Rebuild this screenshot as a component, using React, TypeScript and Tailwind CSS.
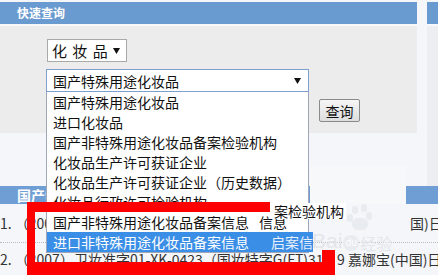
import React from "react";

const font = "font-['Noto_Sans_CJK_SC','Noto_Sans',sans-serif]";

const items = [
  "国产特殊用途化妆品",
  "进口化妆品",
  "国产非特殊用途化妆品备案检验机构",
  "化妆品生产许可获证企业",
  "化妆品生产许可获证企业（历史数据）",
  "化妆品行政许可检验机构",
];

function Tri() {
  return (
    <svg width="7" height="6" viewBox="0 0 7 6" className="shrink-0">
      <path d="M0 0 H7 L3.5 6 Z" fill="#111" />
    </svg>
  );
}

export default function App() {
  return (
    <div className={`relative w-[438px] h-[275px] overflow-hidden bg-[#f4f6f9] text-[#111] ${font}`}>
      {/* top area */}
      <div className="flex pt-[2px]">
        <div className="w-[417px]">
          <div className="h-[22px] bg-[#6a9bd0] flex items-center pl-[17px] text-white text-[12px] font-bold leading-none">
            快速查询
          </div>
          <div className="h-[2px] bg-[#f7f8fa]" />
          <div className="h-[107px] bg-[#ececec] pl-[46px] pt-[13px]">
            <div className="ml-[1px] w-[80px] h-[23px] border border-[#a9a9a9] bg-white flex items-center justify-between pl-[4px] pr-[6px]">
              <span className="text-[15px] leading-none whitespace-pre tracking-[1px]">化 妆 品</span>
              <Tri />
            </div>
            <div className="flex mt-[7px]">
              <div className="relative w-[263px]">
                <div className="h-[23px] border border-[#7f9fd0] bg-white flex items-center justify-between pl-[6px] pr-[7px]">
                  <span className="text-[14px] leading-none">国产特殊用途化妆品</span>
                  <Tri />
                </div>
                <div className="absolute z-10 left-0 top-[23px] w-[263px] bg-white border-x border-b border-[#9fa6b8] text-[14px] leading-none">
                  {items.map((t) => (
                    <div key={t} className="h-[20px] flex items-center pl-[6px] whitespace-nowrap">
                      {t}
                    </div>
                  ))}
                  <div className="h-[20px] flex items-center pl-[6px] whitespace-nowrap">
                    国产非特殊用途化妆品备案信息
                    <span className="ml-[10px]">信息</span>
                  </div>
                  <div className="h-[20px] flex items-center pl-[6px] whitespace-nowrap bg-[#3a8ee6] text-white -mr-[5px]">
                    进口非特殊用途化妆品备案信息
                    <span className="ml-[22px] text-[#e8f0fb]">启案信</span>
                  </div>
                </div>
              </div>
              <button className="ml-[10px] mt-[30px] w-[41px] h-[23px] border border-[#8a8a8a] rounded-[2px] bg-gradient-to-b from-[#f6f6f6] to-[#dddddd] text-[14px] leading-none flex items-center justify-center">
                查询
              </button>
            </div>
          </div>
        </div>
        <div className="w-[10px]" />
        <div className="flex-1">
          <div className="h-[22px] bg-[#6a9bd0]" />
          <div className="h-[2px] bg-[#f7f8fa]" />
          <div className="h-[107px] bg-[#eceef1]" />
        </div>
      </div>

      {/* gap between panels and table */}
      <div className="h-[53px] flex">
        <div className="flex-1" />
        <div className="w-[11px] bg-[#eceef1]" />
      </div>

      {/* table behind */}
      <div className="text-[14px] leading-none text-[#333]">
        <div className="h-[18px] bg-[#6e9ed3] flex items-center pl-[17px] text-white font-bold">
          国产特殊用途化妆品
        </div>
        <div className="h-[39px] flex items-center border-b border-dotted border-[#b8bcc4] whitespace-nowrap">
          <div className="w-[410px] shrink-0 overflow-hidden">1. （2007）卫妆准字01-XK-0422</div>
          <div className="shrink-0">国)日用品</div>
        </div>
        <div className="h-[34px] flex items-start pt-[9px] whitespace-nowrap">
          <div className="w-[337px] shrink-0 overflow-hidden">2. （2007）卫妆准字01-XK-0423（国妆特字G(FT)311</div>
          <div className="shrink-0">9 嘉娜宝(中国)日用品</div>
        </div>
      </div>

      {/* pasted artifact patch */}
      <div className="absolute left-[310px] top-[166px] w-[96px] h-[38px] bg-[#f7f8fa]" />

      {/* stray fragment */}
      <div className="absolute z-20 left-[274px] top-[203px] h-[16px] bg-white pr-[2px] text-[14px] leading-[16px] whitespace-nowrap">
        案检验机构
      </div>

      {/* watermark */}
      <div className="absolute z-30 left-[312px] top-[206px] pointer-events-none">
        <div className="relative w-[90px] h-[48px]">
          <div className="absolute left-[40px] top-[0px] w-[6px] h-[8px] rounded-full bg-[#e8ebef]" />
          <div className="absolute left-[49px] top-[-2px] w-[6px] h-[8px] rounded-full bg-[#e8ebef]" />
          <div className="absolute left-[35px] top-[8px] w-[6px] h-[8px] rounded-full bg-[#e8ebef]" />
          <div className="absolute left-[54px] top-[6px] w-[6px] h-[8px] rounded-full bg-[#e8ebef]" />
          <div className="absolute left-[40px] top-[12px] w-[16px] h-[12px] rounded-full bg-[#e8ebef]" />
          <div className="absolute left-0 top-[24px] flex items-end text-[#e3e6ea] font-['Liberation_Sans',sans-serif] text-[21px] leading-none">
            Bai
            <span className="mx-[1px] w-[16px] h-[16px] rounded-full bg-[#e8ebef] text-white text-[10px] flex items-center justify-center">du</span>
            <span className={`text-[16px] ${font}`}>经验</span>
          </div>
        </div>
      </div>

      {/* red annotation box */}
      <div className="absolute z-40 left-[27px] top-[202px] w-[243px] h-[10px] bg-[#ff0000]" />
      <div className="absolute z-40 left-[27px] top-[202px] w-[8px] h-[73px] bg-[#ff0000]" />
      <div className="absolute z-40 left-[27px] top-[262px] w-[308px] h-[13px] bg-[#ff0000]" />
      <div className="absolute z-40 left-[322px] top-[250px] w-[13px] h-[25px] bg-[#ff0000]" />
    </div>
  );
}
